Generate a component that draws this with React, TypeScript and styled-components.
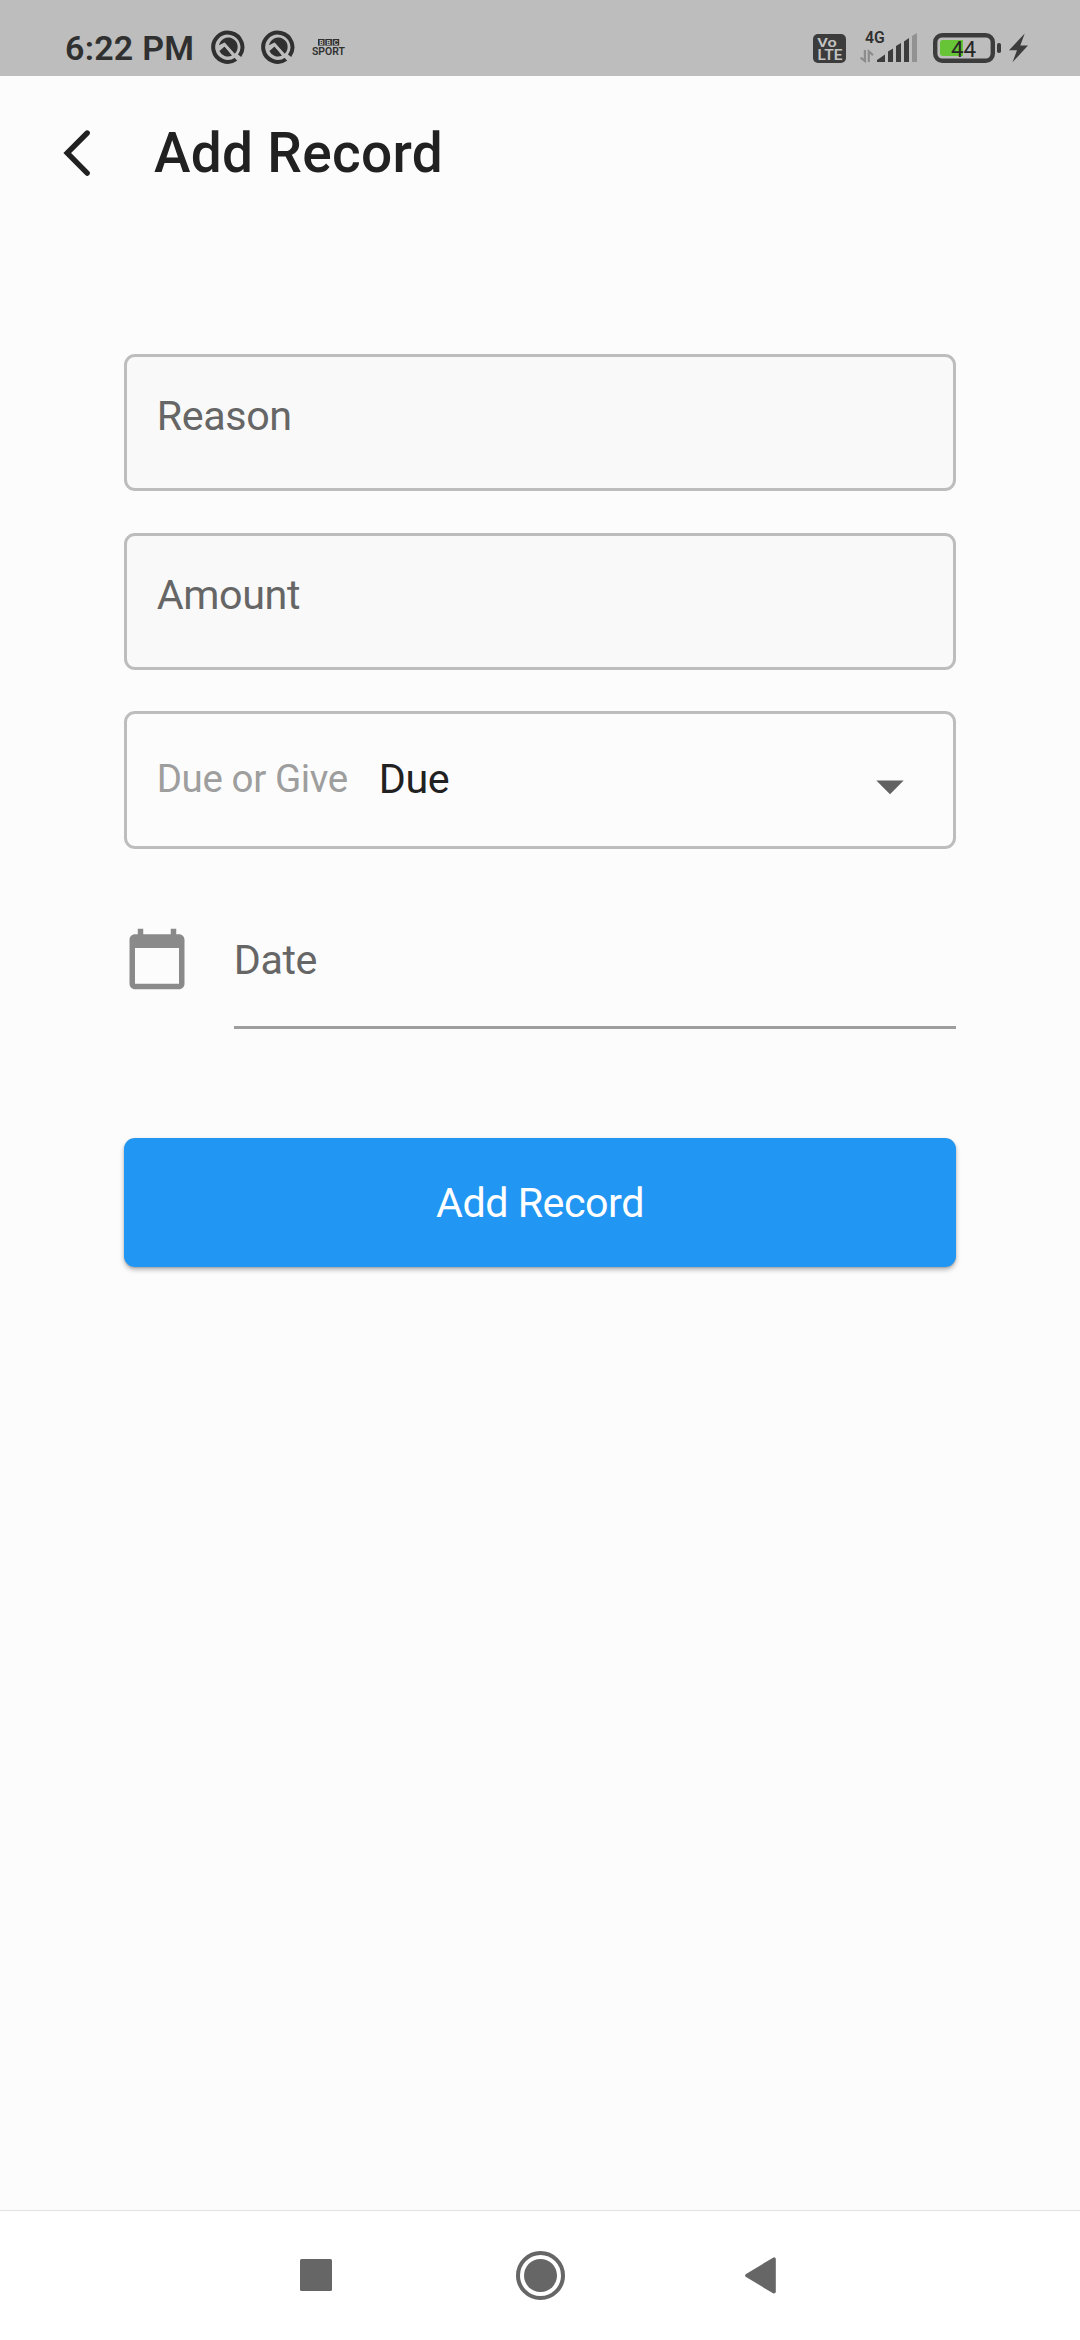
import React from "react";
import styled, { createGlobalStyle } from "styled-components";

const GlobalStyle = createGlobalStyle`
  * { box-sizing: border-box; }
  body { margin: 0; background: #fcfcfc; }
`;

const Screen = styled.div`
  display: flex;
  flex-direction: column;
  width: 1080px;
  height: 2340px;
  background: #fcfcfc;
  font-family: Roboto, "Liberation Sans", sans-serif;
  color: #212121;
  overflow: hidden;
`;

const StatusBar = styled.div`
  display: flex;
  justify-content: space-between;
  height: 76px;
  padding: 0 48px 0 65px;
  background: #bdbdbd;
  color: #303030;
`;

const StatusGroup = styled.div`
  display: flex;
  align-items: flex-start;
`;

const Clock = styled.span`
  width: 146px;
  padding-top: 28px;
  font-size: 34px;
  line-height: 40px;
  font-weight: 600;
  letter-spacing: 0.25px;
  white-space: nowrap;
`;

const StatusGlyph = styled.svg<{ $gap?: number }>`
  display: block;
  flex: none;
  margin-right: ${(p) => p.$gap ?? 0}px;
  font-family: Roboto, "Liberation Sans", sans-serif;
`;

const AppBar = styled.header`
  display: flex;
  align-items: center;
  height: 154px;
  padding-left: 62px;
`;

const BackButton = styled.button`
  display: flex;
  padding: 0;
  margin-right: 60px;
  border: 0;
  background: none;
`;

const Title = styled.h1`
  margin: 0;
  font-size: 55px;
  line-height: 64px;
  font-weight: 500;
  letter-spacing: 0.3px;
`;

const Form = styled.main`
  display: flex;
  flex: 1;
  flex-direction: column;
  padding: 123.75px 123.75px 0;
`;

const Field = styled.div<{ $filled?: boolean }>`
  display: flex;
  height: 137.5px;
  margin-bottom: 41.25px;
  padding: ${(p) => (p.$filled ? "35px" : "40.5px")} 49px 0 30px;
  border: 3px solid #bdbdbd;
  border-radius: 11px;
  background: ${(p) => (p.$filled ? "#f9f9f9" : "transparent")};
`;

const Label = styled.span<{ $hint?: boolean }>`
  font-size: ${(p) => (p.$hint ? 38.5 : 41.25)}px;
  line-height: 48px;
  letter-spacing: -0.4px;
  color: ${(p) => (p.$hint ? "#9e9e9e" : "#666666")};
  white-space: nowrap;
`;

const Value = styled.span`
  flex: 1;
  margin-left: 31px;
  font-size: 41.25px;
  line-height: 48px;
  letter-spacing: -0.4px;
`;

const Caret = styled.svg`
  display: block;
  margin-top: 25.5px;
`;

const DateRow = styled.div`
  display: flex;
  gap: 44px;
  height: 139px;
`;

const CalendarIcon = styled.svg`
  display: block;
  flex: none;
  width: 66px;
  height: 66px;
  margin-top: 36px;
`;

const DateInput = styled.div`
  flex: 1;
  padding-top: 46px;
  border-bottom: 3px solid #9e9e9e;
`;

const SubmitButton = styled.button`
  height: 129px;
  margin-top: 109px;
  padding: 1px 0 0;
  border: 0;
  border-radius: 11px;
  background: #2196f3;
  box-shadow: 0 3px 5px rgba(0, 0, 0, 0.26), 0 1px 2px rgba(0, 0, 0, 0.16);
  color: #ffffff;
  font-family: inherit;
  font-size: 41.25px;
  line-height: 48px;
  letter-spacing: -0.5px;
`;

const NavBar = styled.nav`
  display: flex;
  align-items: center;
  height: 130px;
  padding-left: 300px;
  border-top: 1px solid #e2e2e2;
  background: #ffffff;
`;

const NavIcon = styled.svg<{ $gap?: number }>`
  display: block;
  margin-right: ${(p) => p.$gap ?? 0}px;
`;

const Compass = ({ gap }: { gap: number }) => (
  <StatusGlyph $gap={gap} width="34" height="76" viewBox="0 0 34 76">
    <path d="M28.6 55.8 A14.6 14.6 0 1 0 25.4 59" fill="none" stroke="#303030" strokeWidth="4" />
    <path d="M8 45.2 A9.4 9.4 0 1 1 23.6 53.8 L13.6 42.6 Z" fill="#303030" />
    <path d="M8.4 51 L13.6 46.6 L21 55.6 A9.4 9.4 0 0 1 8.4 51 Z" fill="#303030" />
    <path d="M7 49.8 L13.5 44.5 L28.5 61.5" fill="none" stroke="#bdbdbd" strokeWidth="2.6" />
  </StatusGlyph>
);

const Sport = () => (
  <StatusGlyph width="34" height="76" viewBox="0 0 34 76">
    {[0, 1, 2].map((i) => (
      <rect key={i} x={6 + i * 7.3} y="39" width="6.6" height="6.6" fill="#303030" />
    ))}
    {["B", "B", "C"].map((c, i) => (
      <text key={i} x={9.3 + i * 7.3} y="44.7" fontSize="6.6" fontWeight="600" fill="#c8c8c8" textAnchor="middle">
        {c}
      </text>
    ))}
    <text
      x="0"
      y="55"
      fontSize="10.4"
      fontWeight="600"
      fill="#303030"
      textLength="33"
      lengthAdjust="spacingAndGlyphs"
    >
      SPORT
    </text>
  </StatusGlyph>
);

const Volte = () => (
  <StatusGlyph $gap={14} width="33" height="76" viewBox="0 0 33 76">
    <rect y="34" width="33" height="29" rx="5" fill="#3c3c3c" />
    <text
      x="4.3"
      y="47"
      fontSize="13.5"
      fontWeight="600"
      fill="#c4c4c4"
      textLength="19.5"
      lengthAdjust="spacingAndGlyphs"
    >
      Vo
    </text>
    <text
      x="4.6"
      y="60"
      fontSize="13.8"
      fontWeight="600"
      fill="#c4c4c4"
      textLength="24.8"
      lengthAdjust="spacingAndGlyphs"
    >
      LTE
    </text>
  </StatusGlyph>
);

const Signal = () => (
  <StatusGlyph $gap={16} width="57" height="76" viewBox="860 0 57 76">
    <text x="865" y="43" fontSize="15.8" fontWeight="600" fill="#303030">
      4G
    </text>
    <g fill="none" stroke="#8c8c8c" strokeWidth="2.2">
      <path d="M864.9 50 V61 L860.6 57.5" />
      <path d="M868.8 62 V51.5 L873 55.2" />
    </g>
    <g fill="#3c3c3c">
      <path d="M877 62 V60 L885 54.5 V62 Z" />
      <path d="M888 62 V51.5 L893 48.5 V62 Z" />
      <path d="M896 62 V46 L901 43 V62 Z" />
      <path d="M904 62 V41.5 L909 38 V62 Z" />
    </g>
    <path d="M912 62 V36 L917 33 V62 Z" fill="#929292" />
  </StatusGlyph>
);

const Battery = () => (
  <StatusGlyph $gap={8} width="68" height="76" viewBox="933 0 68 76">
    <rect x="935.2" y="35.2" width="57.6" height="25.6" rx="7" fill="none" stroke="#3c3c3c" strokeWidth="4.4" />
    <path d="M943 40 H963 V56 H943 Q940 56 940 53 V43 Q940 40 943 40 Z" fill="#67c437" />
    <rect x="997" y="43" width="4" height="10" rx="1.8" fill="#3c3c3c" />
    <text x="951" y="56.6" fontSize="22.4" fill="#262626">
      44
    </text>
  </StatusGlyph>
);

const Bolt = () => (
  <StatusGlyph width="23" height="76" viewBox="1009 0 23 76">
    <path d="M1024.7 33.5 L1009 50.3 H1017 L1012.5 62.3 L1028 45.6 H1020.3 Z" fill="#3c3c3c" />
  </StatusGlyph>
);

export default function App() {
  return (
    <>
      <GlobalStyle />
      <Screen>
        <StatusBar>
          <StatusGroup>
            <Clock>6:22 PM</Clock>
            <Compass gap={16} />
            <Compass gap={17} />
            <Sport />
          </StatusGroup>
          <StatusGroup>
            <Volte />
            <Signal />
            <Battery />
            <Bolt />
          </StatusGroup>
        </StatusBar>

        <AppBar>
          <BackButton aria-label="Back">
            <svg width="32" height="50" viewBox="0 0 32 50">
              <path d="M25.2 5 L5.2 25 L25.2 45.2" fill="none" stroke="#212121" strokeWidth="5.4" strokeLinecap="round" />
            </svg>
          </BackButton>
          <Title>Add Record</Title>
        </AppBar>

        <Form>
          <Field $filled>
            <Label>Reason</Label>
          </Field>
          <Field $filled>
            <Label>Amount</Label>
          </Field>
          <Field>
            <Label $hint>Due or Give</Label>
            <Value>Due</Value>
            <Caret width="28" height="15" viewBox="0 0 28 15">
              <path d="M0.3 0.5 H27.7 L14 14.2 Z" fill="#616161" />
            </Caret>
          </Field>
          <DateRow>
            <CalendarIcon viewBox="0 0 24 24">
              <path
                d="M20 3h-1V1h-2v2H7V1H5v2H4c-1.1 0-2 .9-2 2v16c0 1.1.9 2 2 2h16c1.1 0 2-.9 2-2V5c0-1.1-.9-2-2-2zm0 18H4V8h16v13z"
                fill="#8a8a8a"
              />
            </CalendarIcon>
            <DateInput>
              <Label>Date</Label>
            </DateInput>
          </DateRow>
          <SubmitButton>Add Record</SubmitButton>
        </Form>

        <NavBar>
          <NavIcon $gap={184} width="32" height="33" viewBox="0 0 32 33">
            <rect width="32" height="32" rx="1.5" fill="#666666" />
          </NavIcon>
          <NavIcon $gap={180} width="49" height="49" viewBox="0 0 49 49">
            <circle cx="24.5" cy="24.5" r="22.5" fill="none" stroke="#666666" strokeWidth="4" />
            <circle cx="24.5" cy="24.5" r="16.5" fill="#666666" />
          </NavIcon>
          <NavIcon width="31" height="37" viewBox="0 0 31 37">
            <path
              d="M2 18.5 L29 2.2 V34.8 Z"
              fill="#666666"
              stroke="#666666"
              strokeWidth="3.6"
              strokeLinejoin="round"
            />
          </NavIcon>
        </NavBar>
      </Screen>
    </>
  );
}
